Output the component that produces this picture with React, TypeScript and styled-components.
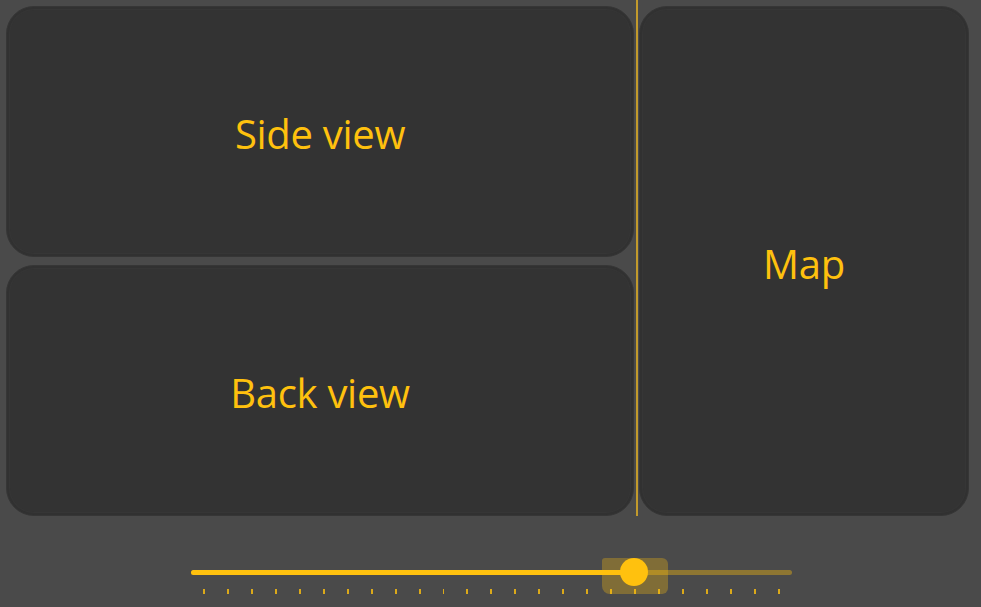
import React, { FC } from "react";
import styled, { createGlobalStyle } from "styled-components";

const GOLD = "#ffc10e";
const TICKS = 25;
const VALUE = 18; // tick index of the thumb

const GlobalStyle = createGlobalStyle`
  html, body {
    margin: 0;
    padding: 0;
    background: #4a4a4a;
  }
  body {
    font-family: "Open Sans", "Noto Sans", sans-serif;
  }
`;

const App: FC = () => {
  const frac = VALUE / (TICKS - 1);
  return (
    <Page>
      <GlobalStyle />
      <Views>
        <Column>
          <Panel>
            <Label>Side view</Label>
          </Panel>
          <Panel>
            <Label>Back view</Label>
          </Panel>
        </Column>
        <Divider />
        <MapColumn>
          <Panel>
            <Label>Map</Label>
          </Panel>
        </MapColumn>
      </Views>
      <SliderArea>
        <Slider>
          <Rail>
            <Filled style={{ width: `${12 + 576 * frac}px` }} />
          </Rail>
          <Ticks>
            {Array.from({ length: TICKS }).map((_, i) => (
              <Tick key={i} />
            ))}
          </Ticks>
          <ThumbSpot style={{ left: `${12 + 576 * frac}px` }}>
            <Halo />
            <Thumb />
          </ThumbSpot>
        </Slider>
      </SliderArea>
    </Page>
  );
};

export default App;

const Page = styled.div`
  width: 981px;
  height: 607px;
  display: flex;
  flex-direction: column;
  background: #4a4a4a;
  overflow: hidden;
`;

const Views = styled.div`
  display: grid;
  grid-template-columns: 628px 2px 330px;
  height: 516px;
  padding-left: 6px;
`;

const Column = styled.div`
  display: grid;
  grid-template-rows: 1fr 1fr;
  row-gap: 8px;
  padding-top: 6px;
  margin-right: 2px;
  width: 628px;
`;

const MapColumn = styled.div`
  display: flex;
  padding-top: 6px;
  margin-left: 3px;
  width: 330px;
`;

const Divider = styled.div`
  width: 2px;
  margin-left: 2px;
  background: #c29a2c;
`;

const Panel = styled.div`
  flex: 1;
  display: flex;
  align-items: center;
  justify-content: center;
  padding-top: 4px;
  background: #333333;
  border: 1px solid #363636;
  border-radius: 28px;
  box-shadow: inset 0 0 0 2px #313131, inset 0 0 0 3px #363636;
  box-sizing: border-box;
`;

const Label = styled.span`
  color: ${GOLD};
  font-size: 40px;
  font-weight: 400;
  letter-spacing: -0.3px;
`;

const SliderArea = styled.div`
  flex: 1;
  display: flex;
  padding-top: 42px;
  padding-left: 191px;
`;

const Slider = styled.div`
  position: relative;
  width: 601px;
  height: 40px;
`;

const Rail = styled.div`
  position: relative;
  margin-top: 12px;
  height: 5px;
  border-radius: 3px;
  background: rgba(255, 193, 14, 0.38);
`;

const Filled = styled.div`
  height: 100%;
  border-radius: 3px;
  background: ${GOLD};
`;

const Ticks = styled.div`
  display: flex;
  gap: 22px;
  padding: 0 12px;
  margin-top: 14px;
`;

const Tick = styled.div`
  width: 2px;
  height: 5px;
  background: rgba(255, 193, 14, 0.8);
`;

const ThumbSpot = styled.div`
  position: absolute;
  top: 14px;
  width: 0;
  height: 0;
`;

const Halo = styled.div`
  position: absolute;
  left: -33px;
  top: -14px;
  width: 66px;
  height: 36px;
  border-radius: 3px 6px 6px 8px;
  background: rgba(255, 193, 14, 0.3);
`;

const Thumb = styled.div`
  position: absolute;
  left: -15px;
  top: -14px;
  width: 28px;
  height: 28px;
  border-radius: 50%;
  background: ${GOLD};
`;
